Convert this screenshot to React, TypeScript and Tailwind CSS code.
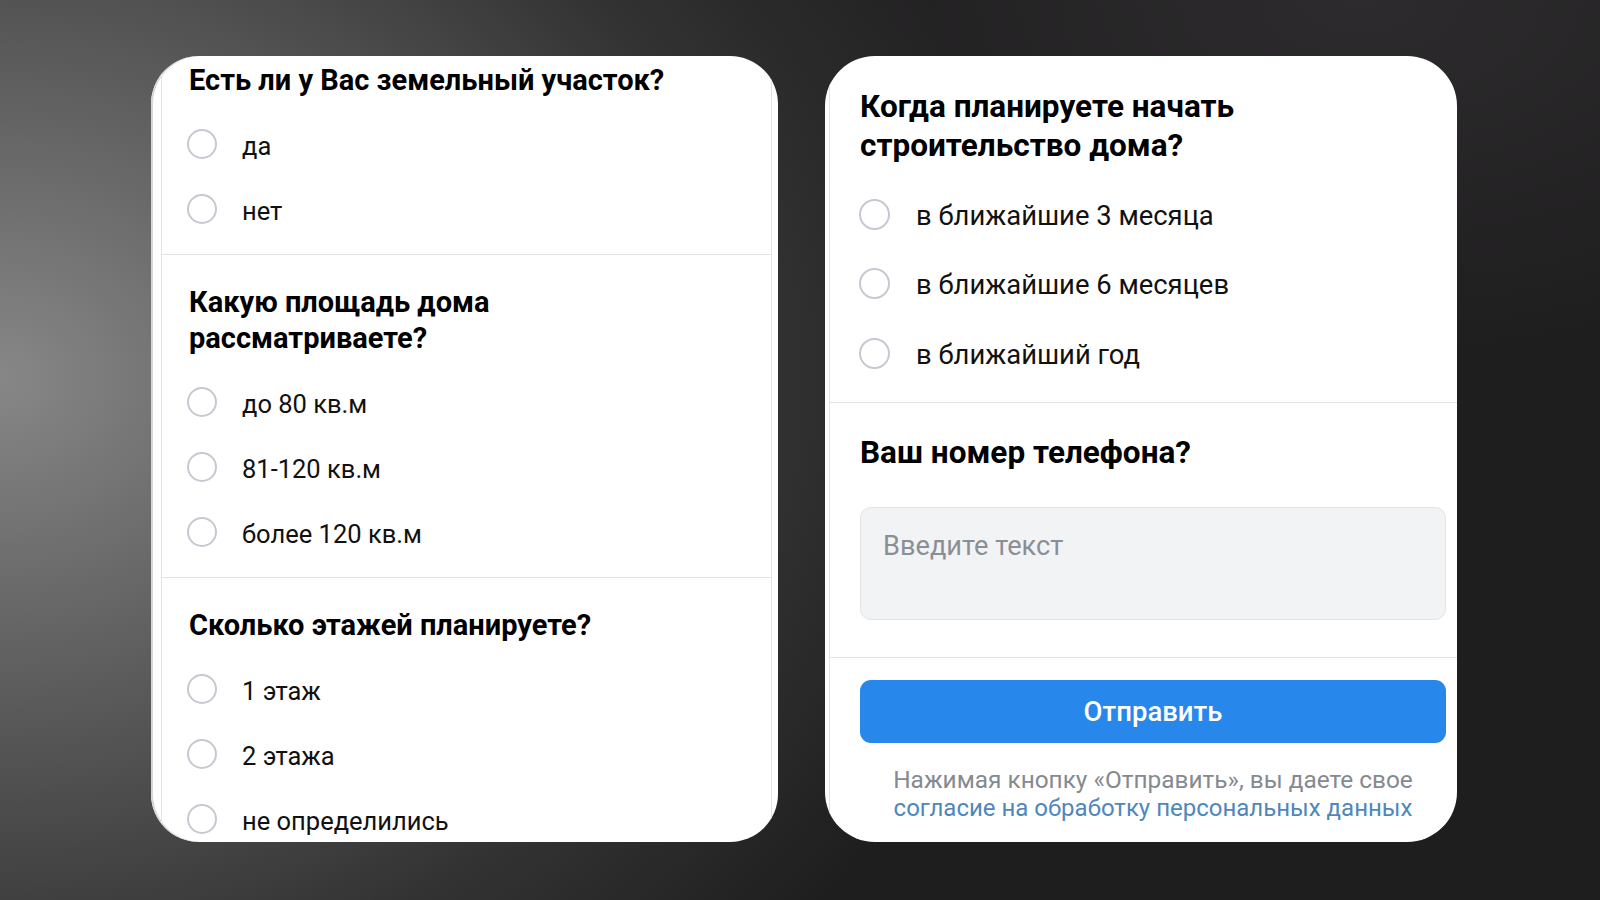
import React from 'react'

const leftSections = [
  {
    title: ['Есть ли у Вас земельный участок?'],
    options: ['да', 'нет'],
    pt: 'pt-[6px]',
  },
  {
    title: ['Какую площадь дома', 'рассматриваете?'],
    options: ['до 80 кв.м', '81-120 кв.м', 'более 120 кв.м'],
    pt: 'pt-[29px]',
  },
  {
    title: ['Сколько этажей планируете?'],
    options: ['1 этаж', '2 этажа', 'не определились'],
    pt: 'pt-[29px]',
  },
]

const timeOptions = ['в ближайшие 3 месяца', 'в ближайшие 6 месяцев', 'в ближайший год']

const SmallRadio = () => (
  <span className="block w-[30px] h-[30px] shrink-0 rounded-full border-2 border-[#c5c9d0] -ml-[2px]" />
)

const LargeRadio = () => (
  <span className="block w-[31px] h-[31px] shrink-0 rounded-full border-2 border-[#c5c9d0] -ml-[1px]" />
)

const Divider = () => <div className="h-px bg-[#e3e4e8]" />

function LeftCard() {
  return (
    <div className="w-[627px] h-[786px] shrink-0 bg-white rounded-[48px] overflow-hidden pl-[10px] pr-[6px] shadow-[inset_2px_0_0_#d6d7da]">
      <div className="h-full border-x border-[#e3e4e8]">
        {leftSections.map((s, i) => (
          <React.Fragment key={i}>
            {i > 0 && <Divider />}
            <div className={`pl-[27px] pb-[12.5px] ${s.pt}`}>
              <h2 className="text-[29px] leading-[36px] font-bold text-black">
                {s.title.map((t, j) => (
                  <React.Fragment key={j}>
                    {j > 0 && <br />}
                    {t}
                  </React.Fragment>
                ))}
              </h2>
              <div className="mt-[13.5px]">
                {s.options.map((o) => (
                  <div key={o} className="h-[65px] flex items-center gap-[25px]">
                    <SmallRadio />
                    <span className="text-[25.5px] leading-[30px] text-[#111] pt-[3px]">{o}</span>
                  </div>
                ))}
              </div>
            </div>
          </React.Fragment>
        ))}
      </div>
    </div>
  )
}

function RightCard() {
  return (
    <div className="w-[632px] h-[786px] shrink-0 bg-white rounded-[50px] overflow-hidden pl-[4px]">
      <div className="h-full border-l border-[#e3e4e8]">
        <div className="pl-[30px] pr-[11px] pt-[30.5px] pb-[14.25px]">
          <h2 className="text-[31.5px] leading-[39px] font-bold text-black">
            Когда планируете начать
            <br />
            строительство дома?
          </h2>
          <div className="mt-[14.75px]">
            {timeOptions.map((o) => (
              <div key={o} className="h-[69.5px] flex items-center gap-[26px]">
                <LargeRadio />
                <span className="text-[27.4px] leading-[32px] text-[#111] pt-[3px]">{o}</span>
              </div>
            ))}
          </div>
        </div>
        <Divider />
        <div className="pl-[30px] pr-[11px] pt-[29.5px] pb-[37px]">
          <h2 className="text-[31.5px] leading-[39px] font-bold text-black">Ваш номер телефона?</h2>
          <div className="mt-[35.5px] h-[113px] rounded-[11px] bg-[#f2f3f5] border border-[#e3e4e8] pl-[22px] pt-[22px]">
            <span className="text-[27.2px] leading-[32px] text-[#8a8f96]">Введите текст</span>
          </div>
        </div>
        <Divider />
        <div className="pl-[30px] pr-[11px] pt-[22px]">
          <button className="w-full h-[63px] rounded-[11px] bg-[#2787ea] text-white text-[27.5px] font-medium flex items-center justify-center">
            Отправить
          </button>
          <p className="mt-[23px] text-center text-[24.4px] leading-[28px] text-[#858a91]">
            Нажимая кнопку «Отправить», вы даете свое
            <br />
            <span className="text-[24px] text-[#4f87bb]">согласие на обработку персональных данных</span>
          </p>
        </div>
      </div>
    </div>
  )
}

export default function App() {
  return (
    <div className="w-full h-[900px] overflow-hidden font-[family-name:Roboto,'Noto_Sans',sans-serif] bg-[#1f1e1f] bg-[radial-gradient(ellipse_65%_95%_at_0%_42%,#878787_0%,#5e5e5e_35%,#333_72%,transparent_100%),radial-gradient(ellipse_40%_40%_at_85%_0%,#2d2b2d_0%,transparent_100%)]">
      <div className="flex items-start pt-[56px] pl-[151px] gap-[47px]">
        <LeftCard />
        <RightCard />
      </div>
    </div>
  )
}
